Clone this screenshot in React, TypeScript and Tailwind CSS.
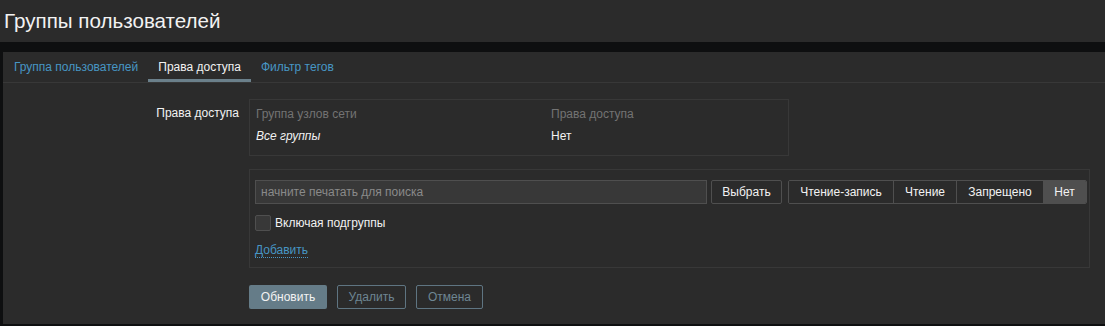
import { useState } from "react";

const tabs = ["Группа пользователей", "Права доступа", "Фильтр тегов"];
const levels = [
  { name: "Чтение-запись", w: "w-[104px]" },
  { name: "Чтение", w: "w-[63px]" },
  { name: "Запрещено", w: "w-[87px]" },
  { name: "Нет", w: "w-[43px]" },
];

export default function App() {
  const [tab] = useState(1);
  const [level, setLevel] = useState(3);

  return (
    <div className="h-[326px] w-full overflow-hidden bg-[#0e0f10] font-['Liberation_Sans',Arial,sans-serif] text-[12px] text-[#f2f2f2]">
      <header className="flex h-[42px] items-center bg-[#2b2b2b] px-[4px]">
        <h1 className="text-[20.6px] leading-none text-[#f2f2f2]">Группы пользователей</h1>
      </header>

      <div className="ml-[3px] mt-[10px] h-[272px] bg-[#2b2b2b]">
        <nav className="flex h-[31px] border-b border-[#383838] pl-[1px]">
          {tabs.map((name, i) => (
            <div
              key={name}
              className={`flex items-center border-b-[3px] px-[10px] pt-[3px] ${
                i === tab ? "border-[#6b808b] text-[#f2f2f2]" : "border-transparent text-[#4796c4]"
              }`}
            >
              {name}
            </div>
          ))}
        </nav>

        <div className="mt-[16px] flex">
          <div className="w-[236px] pt-[5px] text-right">Права доступа</div>

          <div className="ml-[10px] w-[841px]">
            <div className="w-[540px] border border-[#383838] px-[6px] pb-[6px] pt-[5px]">
              <div className="flex h-[17px] items-center text-[#737373]">
                <span className="w-[295px]">Группа узлов сети</span>
                <span>Права доступа</span>
              </div>
              <div className="flex h-[27px] items-center">
                <span className="w-[295px] italic">Все группы</span>
                <span>Нет</span>
              </div>
            </div>

            <div className="mt-[13px] border border-[#383838] px-[5px] pb-[9px] pt-[10px]">
              <div className="flex items-center">
                <input
                  className="h-[24px] w-[452px] shrink-0 border border-[#4f4f4f] bg-[#383838] px-[5px] text-[12px] text-[#f2f2f2] outline-none placeholder:text-[#8a8a8a]"
                  placeholder="начните печатать для поиска"
                />
                <button className="ml-[4px] h-[24px] w-[71px] shrink-0 rounded-[2px] border border-[#4f4f4f] bg-[#2b2b2b] text-[#f2f2f2]">
                  Выбрать
                </button>
                <div className="ml-[6px] flex h-[24px] shrink-0 overflow-hidden rounded-[2px] border border-[#4f4f4f]">
                  {levels.map((l, i) => (
                    <button
                      key={l.name}
                      onClick={() => setLevel(i)}
                      className={`h-full shrink-0 ${l.w} ${i > 0 && i !== 3 ? "border-l border-[#4f4f4f]" : ""} ${
                        i === level ? "bg-[#4f4f4f]" : "bg-[#2b2b2b]"
                      }`}
                    >
                      {l.name}
                    </button>
                  ))}
                </div>
              </div>

              <label className="mt-[11px] flex h-[16px] items-center leading-[16px]">
                <span className="h-[16px] w-[16px] rounded-[2px] border border-[#4f4f4f] bg-[#383838]" />
                <span className="ml-[4px]">Включая подгруппы</span>
              </label>

              <div className="mt-[11px] h-[16px] leading-[16px]">
                <a className="border-b border-dotted border-[#4796c4] text-[#4796c4]">Добавить</a>
              </div>
            </div>

            <div className="mt-[17px] flex gap-[10px]">
              <button className="h-[24px] w-[78px] rounded-[2px] bg-[#657c88] text-[#f2f2f2]">Обновить</button>
              <button className="h-[24px] w-[69px] rounded-[2px] border border-[#5f7582] text-[#6e8693]">Удалить</button>
              <button className="h-[24px] w-[67px] rounded-[2px] border border-[#5f7582] text-[#6e8693]">Отмена</button>
            </div>
          </div>
        </div>
      </div>
    </div>
  );
}
